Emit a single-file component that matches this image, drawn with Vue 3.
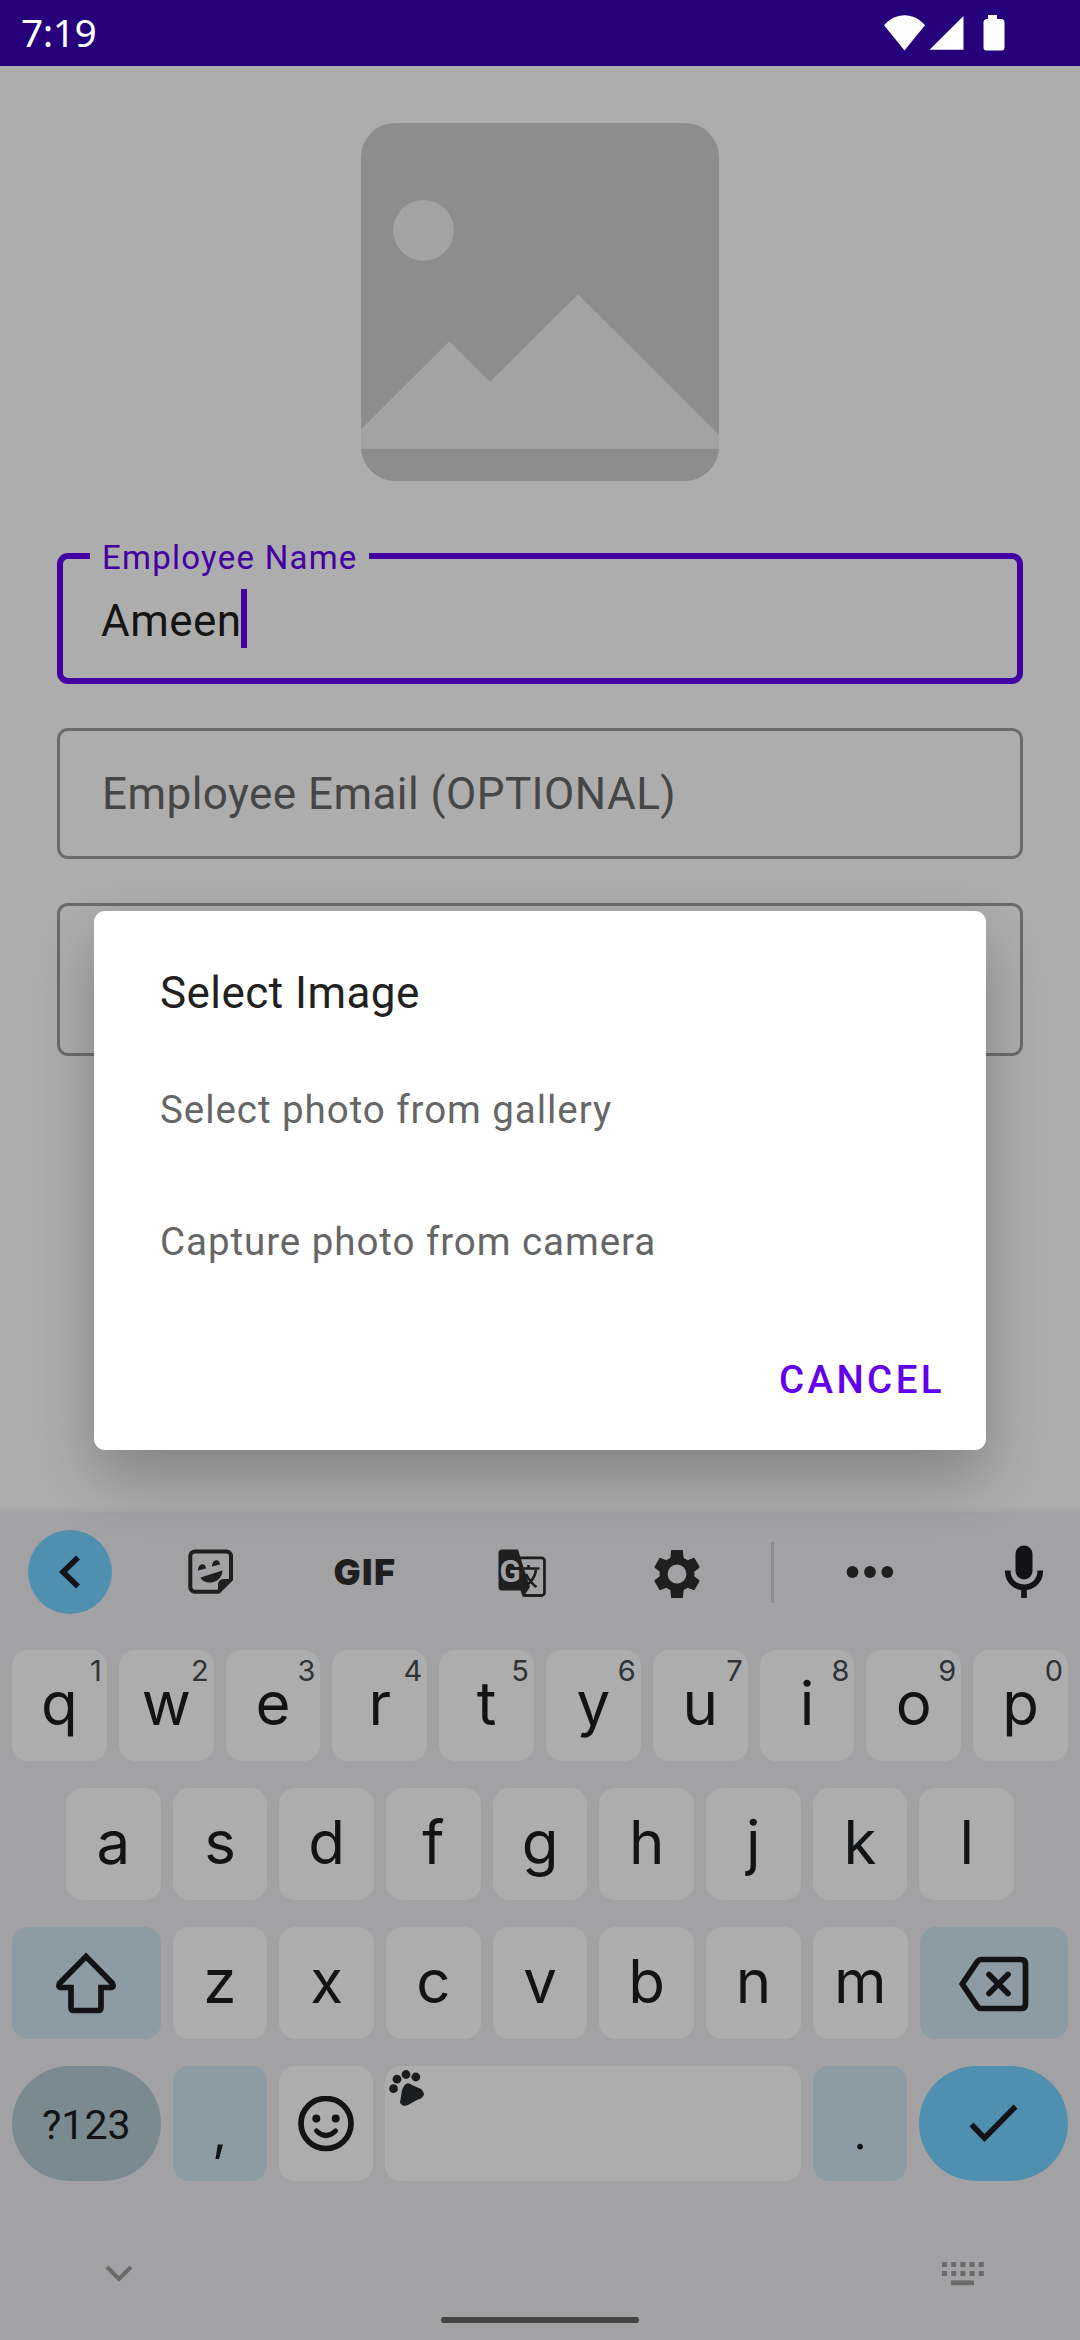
<script setup>
const digitRow = [...'qwertyuiop'].map((letter, i) => ({ letter, hint: (i + 1) % 10 }))
const homeRow = [...'asdfghjkl']
const bottomRow = [...'zxcvbnm']
const options = ['Select photo from gallery', 'Capture photo from camera']
</script>

<template>
  <div class="screen">
    <header class="status">
      <span class="clock">7:19</span>
      <svg class="status-icons" width="120" height="36" viewBox="0 0 120 36">
        <path d="M20.500 35.500 0 10.200C11-3.200 30-3.200 41 10.200Z" />
        <path d="M79.500 1V34.800H45.500Z" />
        <path d="M104 0h9v4h4a3.500 3.500 0 0 1 3.500 3.500v25a3 3 0 0 1-3 3h-15a3 3 0 0 1-3-3v-25a3.500 3.500 0 0 1 3.500-3.500h1z" />
      </svg>
    </header>

    <main class="form">
      <svg class="photo" width="358" height="358" viewBox="0 0 358 358">
        <rect width="358" height="358" rx="34" fill="#8d8d8d" />
        <circle cx="62.500" cy="107.300" r="30.400" fill="#a3a3a3" />
        <path d="M0 306.300 88.300 218.300 129 259 217 171.300 358 312V325.700H0Z" fill="#a3a3a3" />
      </svg>
      <div class="field active">
        <span class="label">Employee Name</span>
        <span class="value">Ameen</span><i class="caret"></i>
      </div>
      <div class="field"><span class="hint">Employee Email (OPTIONAL)</span></div>
      <div class="field tall"></div>
    </main>

    <section class="keyboard">
      <div class="toolbar">
        <span class="back">
          <svg width="84" height="84" viewBox="0 0 84 84"><path d="M50 27.500 35 42 50 56.500" fill="none" stroke="#111315" stroke-width="5.600" /></svg>
        </span>
        <svg width="48" height="48" viewBox="0 0 48 48">
          <path d="M8 3.500H39.500A4.500 4.500 0 0 1 44 8V31.500L31.500 43.700H8A4.500 4.500 0 0 1 3.300 39.500V8A4.500 4.500 0 0 1 8 3.500Z" fill="none" stroke="#1f1f1f" stroke-width="4" />
          <path d="M31 45V37q0-6 6-6h8zM13.500 29.500 35.500 22.500C35 36 17 38 13.500 29.500ZM11 22.500c0-8 8-8 8-2zM25 18.500c0-8 8-8 8-2z" fill="#1f1f1f" />
        </svg>
        <span class="gif">GIF</span>
        <svg class="translate" width="50" height="50" viewBox="0 0 50 50">
          <path d="M20 8.800H43.500a3 3 0 0 1 3 3V43.500a3 3 0 0 1-3 3H26" fill="none" stroke="#1f1f1f" stroke-width="2.800" />
          <path d="M4 .5H20L26 20 32 38l-7 10.500L22.500 41.500H4a3.500 3.500 0 0 1-3.500-3.500V4A3.500 3.500 0 0 1 4 .5Z" fill="#1f1f1f" />
          <text x="1.500" y="33" class="glyph-g">G</text>
          <path d="M25.500 19.500H41.500M30.500 16v4M28 25c2.500 5 6 10 10.500 13M38 21c-1 7-5 12-9 15" fill="none" stroke="#1f1f1f" stroke-width="2.600" />
        </svg>
        <svg class="gear" width="58" height="58" viewBox="0 0 24 24"><path fill="#1f1f1f" d="M19.140 12.940c.04-.3.060-.61.060-.94 0-.32-.020-.64-.070-.94l2.030-1.580c.18-.14.230-.41.120-.61l-1.920-3.320c-.12-.22-.37-.29-.59-.22l-2.390.960c-.5-.38-1.030-.7-1.620-.94L14.400 2.100H9.600l-.36 3.250c-.59.240-1.130.570-1.620.940L5.230 5.330c-.22-.080-.47 0-.59.220L2.740 8.870c-.12.210-.080.470.120.610l2.030 1.580c-.050.300-.090.630-.090.940s.020.640.070.940l-2.030 1.580c-.18.140-.23.410-.12.610l1.920 3.320c.12.220.37.290.59.220l2.390-.96c.5.380 1.030.7 1.620.940l.36 3.250h4.800l.36-3.250c.59-.24 1.130-.56 1.620-.94l2.390.960c.22.080.47 0 .59-.22l1.920-3.320c.12-.22.070-.47-.12-.61ZM12 15.900a3.900 3.900 0 1 1 0-7.800 3.900 3.900 0 0 1 0 7.800Z" /></svg>
        <i class="divider"></i>
        <svg width="48" height="12" viewBox="0 0 48 12" fill="#1f1f1f"><circle cx="6.500" cy="6" r="5.900" /><circle cx="24" cy="6" r="5.900" /><circle cx="41.300" cy="6" r="5.900" /></svg>
        <svg width="40" height="56" viewBox="0 0 40 56"><rect x="11.500" y="1.500" width="17" height="34" rx="8.500" fill="#111315" /><path d="M3.700 26.500C3.700 49 36.300 49 36.300 26.500M20 43V54" fill="none" stroke="#111315" stroke-width="5.700" /></svg>
      </div>

      <div class="row">
        <span v-for="key in digitRow" :key="key.letter" class="key">{{ key.letter }}<sup>{{ key.hint }}</sup></span>
      </div>
      <div class="row home">
        <span v-for="letter in homeRow" :key="letter" class="key">{{ letter }}</span>
      </div>
      <div class="row">
        <span class="key wide tint">
          <svg width="64" height="64" viewBox="0 0 64 64"><path d="M32 5.500 5.500 32.500Q3.500 37 8 36.500H17V56.500Q17 59.500 20 59.500H44Q47 59.500 47 56.500V36.500H56Q60.500 37 58.500 32.500Z" fill="none" stroke="#111315" stroke-width="5.700" /></svg>
        </span>
        <span v-for="letter in bottomRow" :key="letter" class="key">{{ letter }}</span>
        <span class="key wide tint">
          <svg class="erase" width="70" height="58" viewBox="0 0 70 58"><path d="M22 4.500H62Q66.500 4.500 66.500 9V49Q66.500 53.500 62 53.500H22Q20 53.500 18.500 51.500L3.300 29 18.500 6.500Q20 4.500 22 4.500ZM30 19.500 49 38.500M49 19.500 30 38.500" fill="none" stroke="#111315" stroke-width="5.700" stroke-linecap="round" /></svg>
        </span>
      </div>
      <div class="row last">
        <span class="key wide pill symbols">?123</span>
        <span class="key tint punct">,</span>
        <span class="key">
          <svg width="56" height="56" viewBox="0 0 56 56"><circle cx="28" cy="27.500" r="25" fill="none" stroke="#111315" stroke-width="5.700" /><circle cx="18.300" cy="22.500" r="4" fill="#111315" /><circle cx="37.700" cy="22.500" r="4" fill="#111315" /><path d="M18.500 35Q28 44 37.500 35" fill="none" stroke="#111315" stroke-width="5" stroke-linecap="round" /></svg>
        </span>
        <span class="key space">
          <svg width="36" height="38" viewBox="0 0 36 38" fill="#1b1d1e"><circle cx="4.500" cy="18.700" r="4.400" /><circle cx="8" cy="9.200" r="4.400" /><circle cx="17" cy="4.500" r="4.400" /><circle cx="26.800" cy="7" r="4.400" /><path d="M15 16Q18 11 23 15L32 19Q38 24 32 28.500Q28 29.500 20 34.500Q14 38 11 32.500L13 20Z" /></svg>
        </span>
        <span class="key tint punct dot">.</span>
        <span class="key wide pill enter">
          <svg width="50" height="40" viewBox="0 0 50 40"><path d="M2.500 20.500 15.500 34 46.500 2.500" fill="none" stroke="#111315" stroke-width="5.500" /></svg>
        </span>
      </div>

      <footer class="nav">
        <svg width="28" height="18" viewBox="0 0 28 18"><path d="M2 2 14 14 26 2" fill="none" stroke="#6a6a6a" stroke-width="4" /></svg>
        <svg width="42" height="24" viewBox="0 0 42 24"><path d="M0 2.500H42M0 11.500H42" stroke="#6a6a6a" stroke-width="5" stroke-dasharray="5 4.200" /><path d="M9 20.800H32" stroke="#6a6a6a" stroke-width="4.800" /></svg>
      </footer>
      <i class="handle"></i>
    </section>

    <div class="dialog">
      <h1>Select Image</h1>
      <p v-for="option in options" :key="option">{{ option }}</p>
      <button>CANCEL</button>
    </div>
  </div>
</template>

<style>
body { background: #adadad; }
</style>

<style scoped>
* { box-sizing: border-box; }
.screen { position: relative; display: flex; flex-direction: column; width: 1080px; height: 2340px; overflow: hidden; background: #adadad; font-family: Roboto, "Noto Sans", sans-serif; }
svg { display: block; flex: none; }
.status { display: flex; justify-content: space-between; align-items: center; height: 66px; padding: 0 76px 0 21px; background: #25007a; color: #fff; }
.clock { font-family: "Noto Sans", sans-serif; font-size: 39px; line-height: 66px; letter-spacing: -.5px; padding-bottom: 2px; }
.status-icons { fill: #fff; overflow: visible; }
.form { display: flex; flex-direction: column; flex: 1; padding: 57px 57px 0; }
.photo { align-self: center; margin-bottom: 72px; }
.field { position: relative; display: flex; align-items: center; height: 131px; margin-bottom: 44px; padding-left: 42px; border: 3px solid #6b6b6b; border-radius: 11px; font-size: 44px; letter-spacing: .45px; }
.active { padding-left: 38px; border: 6px solid #4300a2; color: #141414; }
.label { position: absolute; left: 27px; top: -20px; padding: 0 11px 0 12px; background: #adadad; color: #4300a2; font-size: 33px; line-height: 38px; letter-spacing: 1.250px; }
.value { padding-top: 4px; }
.caret { width: 6px; height: 59px; margin-left: -1px; background: #4300a2; }
.hint { color: #464646; }
.tall { height: 153px; }
.keyboard { display: flex; flex-direction: column; height: 828px; background: #a2a2a4; box-shadow: 0 -2px 6px rgba(0, 0, 0, .05); color: #111315; }
.toolbar { display: grid; grid-template-columns: 140px 142px 166px 150px 158px 32px 163px 146px; place-items: center; height: 120px; }
.back { width: 84px; height: 84px; border-radius: 50%; background: #4f8faf; }
.gif { color: #1f1f1f; font-family: Inter, sans-serif; font-size: 36px; font-weight: 900; line-height: 40px; letter-spacing: 1.500px; }
.translate, .gear { margin-top: 3px; }
.glyph-g { fill: #a2a2a4; font: 700 31px Roboto, sans-serif; }
.divider { width: 3px; height: 61px; background: #8c8c8e; }
.row { display: flex; gap: 12px; height: 112px; margin: 18px 12px 9px; }
.toolbar + .row { height: 111px; }
.home { margin-inline: 66px; }
.last { height: 115px; }
.key { position: relative; display: flex; flex: 94.800 1 0; min-width: 0; align-items: center; justify-content: center; border-radius: 16px; background: #adadad; font-family: Inter, Roboto, sans-serif; font-size: 60px; line-height: 108px; }
.key:not(:has(svg)) { padding-bottom: 5px; }
sup { position: absolute; top: 6px; right: 5px; color: #2f3335; font-size: 29px; line-height: 30px; }
.wide { flex: 0 0 148.500px; }
.tint { background: #8d9ba4; }
.erase { margin-top: 2px; }
.pill { border-radius: 58px; }
.key.symbols { padding: 3px 0 0; background: #7b8991; font-family: Roboto, sans-serif; font-size: 41px; }
.enter { background: #4f8faf; }
.space { flex: 0 0 416px; align-items: flex-start; justify-content: flex-start; padding: 4px; }
.key.punct { padding: 17px 0 0; font-size: 52px; }
.key.dot { font-family: Roboto, sans-serif; }
.nav { display: flex; align-items: center; justify-content: space-between; height: 36px; margin-top: 66px; padding: 0 96px 0 105px; }
.handle { width: 198px; height: 6px; margin: 25px auto 0; border-radius: 3px; background: #424442; }
.dialog { position: absolute; left: 94px; top: 911px; display: flex; flex-direction: column; width: 892px; height: 539px; padding: 48px 41px 0 66px; border-radius: 11px; background: #fff; box-shadow: 0 28px 60px rgba(0, 0, 0, .24); }
h1 { margin: 0 0 17px; color: #212121; font-size: 44px; font-weight: 400; line-height: 68px; letter-spacing: .45px; }
p { margin: 0; color: #666; font-size: 38.500px; line-height: 132px; letter-spacing: .95px; }
button { align-self: flex-end; margin: 2px 0 0; padding: 0; border: 0; background: none; color: #6200ee; font: 500 38.500px/140px Roboto, sans-serif; letter-spacing: 3.400px; }
</style>
